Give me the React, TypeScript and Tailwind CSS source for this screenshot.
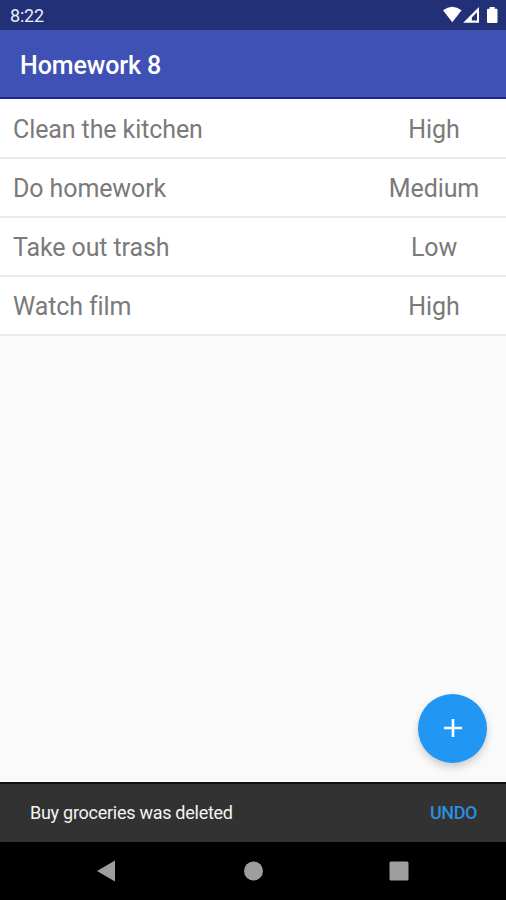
const tasks = [
  { title: "Clean the kitchen", priority: "High" },
  { title: "Do homework", priority: "Medium" },
  { title: "Take out trash", priority: "Low" },
  { title: "Watch film", priority: "High" },
];

function StatusBar() {
  return (
    <div className="flex h-[30px] shrink-0 items-center justify-between bg-[#223078] pl-2.5 text-white">
      <span className="pt-px text-[18px] leading-5 tracking-[-0.2px] text-[#e9ebf5]">8:22</span>
      <svg width="64" height="30" viewBox="0 0 64 30" fill="white">
        <path d="M1 10.2Q10.3 3.2 19.6 10.2L10.3 22.2Z" />
        <path fillRule="evenodd" d="M37 7V22.8H21.2ZM35 12.2L29.8 17.6V20.5H35Z" />
        <path d="M47.7 7H52.7V8.7H54.5Q55.5 8.7 55.5 9.8V21.8Q55.5 23 54.4 23H46Q45 23 45 21.8V9.8Q45 8.7 46 8.7H47.7Z" />
      </svg>
    </div>
  );
}

function TaskRow({ title, priority }: { title: string; priority: string }) {
  return (
    <li className="flex h-[59px] items-center border-b-2 border-[#ebebeb] bg-white pl-[13px] text-[25px] leading-[30px] tracking-[-0.1px] text-[#7a7a7a]">
      <span className="flex-1 pt-0.5">{title}</span>
      <span className="w-36 pt-0.5 text-center">{priority}</span>
    </li>
  );
}

export default function App() {
  return (
    <div className="relative flex h-[900px] w-[506px] flex-col overflow-hidden bg-[#fafafa] font-[Roboto,sans-serif]">
      <StatusBar />
      <header className="flex h-[69px] shrink-0 items-center border-b-2 border-[#1c22a0] bg-[#3f51b5] pl-5">
        <h1 className="pt-1 text-[25px] leading-8 font-medium tracking-[-0.1px] text-white">Homework 8</h1>
      </header>
      <main className="flex-1">
        <ul className="bg-white pt-px">
          {tasks.map((task) => (
            <TaskRow key={task.title} {...task} />
          ))}
        </ul>
      </main>
      <button
        aria-label="Add task"
        className="absolute right-[19px] bottom-[137px] flex size-[69px] items-center justify-center rounded-full bg-[#2196f3] shadow-[0_5px_8px_rgba(0,0,0,0.15),0_1px_5px_rgba(0,0,0,0.06)]"
      >
        <svg width="18" height="18" viewBox="0 0 18 18" stroke="white" strokeWidth="2.6" className="mb-px">
          <path d="M9 0V18M0 9H18" />
        </svg>
      </button>
      <div className="flex h-[60px] shrink-0 items-center justify-between border-t-2 border-[#101010] bg-[#323232] pr-[29px] pb-px pl-[30px] text-[18px] leading-5">
        <span className="tracking-[-0.27px] text-[#f4f4f4]">Buy groceries was deleted</span>
        <button className="font-medium tracking-[-0.4px] text-[#2c8ede]">UNDO</button>
      </div>
      <nav className="h-[58px] shrink-0 bg-black">
        <svg width="506" height="58" viewBox="0 0 506 58" fill="#9e9e9e">
          <path d="M97 29L115 18.5V39.5Z" />
          <circle cx="253.5" cy="29" r="9.5" />
          <rect x="389.5" y="19.5" width="19" height="19" rx="1.5" />
        </svg>
      </nav>
    </div>
  );
}
